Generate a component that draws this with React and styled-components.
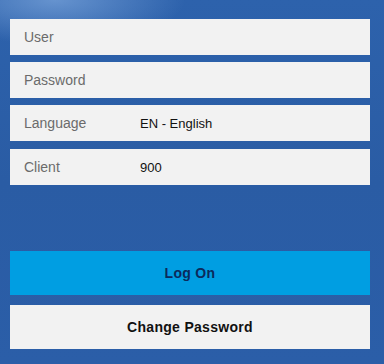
import styled, { createGlobalStyle } from "styled-components";

const GlobalStyle = createGlobalStyle`
  html, body {
    margin: 0;
    padding: 0;
    background: #2b5ea6;
  }
`;

const Page = styled.div`
  width: 384px;
  height: 364px;
  box-sizing: border-box;
  padding: 19px 14px 0 10px;
  background:
    radial-gradient(ellipse 130px 45px at 55px 0px, rgba(140, 180, 230, 0.6), rgba(140, 180, 230, 0) 100%),
    linear-gradient(180deg, #2d62ac 0%, #2a5ca4 50%, #2b5ea8 100%);
  font-family: "Liberation Sans", Arial, sans-serif;
  display: flex;
  flex-direction: column;
`;

const Fields = styled.div`
  display: flex;
  flex-direction: column;
  gap: 7px;
`;

const Field = styled.div`
  height: 36px;
  background: #f2f2f2;
  display: flex;
  align-items: center;
  padding-left: 14px;
  margin-top: ${(p) => (p.$extra ? "1px" : "0")};
`;

const Label = styled.span`
  color: #6b6b6b;
  font-size: 14px;
  width: 116px;
`;

const Value = styled.span`
  color: #111;
  font-size: 13px;
`;

const Buttons = styled.div`
  margin-top: 66px;
  display: flex;
  flex-direction: column;
  gap: 10px;
`;

const Button = styled.button`
  height: 44px;
  border: none;
  margin: 0;
  padding: 0;
  background: ${(p) => (p.$primary ? "#009ee2" : "#f2f2f2")};
  color: ${(p) => (p.$primary ? "#0b2a5c" : "#111")};
  font-family: "Liberation Sans", Arial, sans-serif;
  font-weight: bold;
  font-size: 14px;
  letter-spacing: 0.3px;
`;

export default function App() {
  return (
    <>
      <GlobalStyle />
      <Page>
        <Fields>
          <Field>
            <Label>User</Label>
          </Field>
          <Field>
            <Label>Password</Label>
          </Field>
          <Field>
            <Label>Language</Label>
            <Value>EN - English</Value>
          </Field>
          <Field $extra>
            <Label>Client</Label>
            <Value>900</Value>
          </Field>
        </Fields>
        <Buttons>
          <Button $primary>Log On</Button>
          <Button>Change Password</Button>
        </Buttons>
      </Page>
    </>
  );
}
